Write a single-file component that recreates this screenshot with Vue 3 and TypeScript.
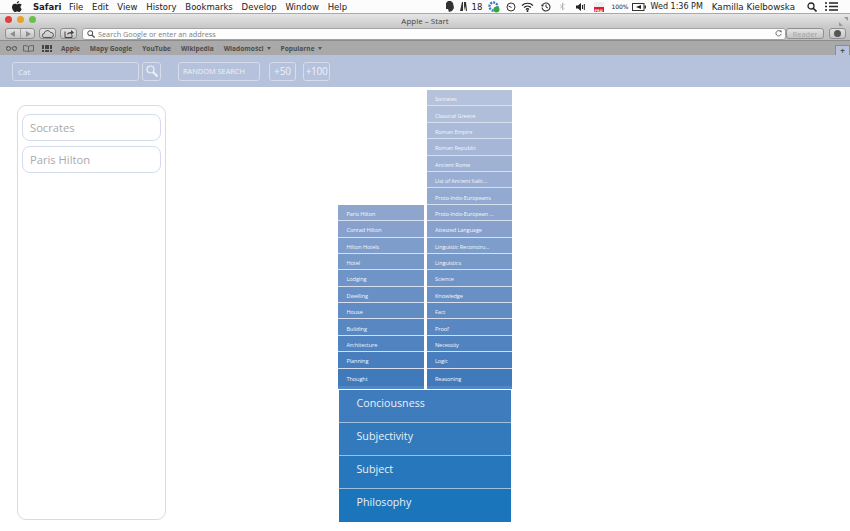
<script setup lang="ts">
const menuItems = ['File', 'Edit', 'View', 'History', 'Bookmarks', 'Develop', 'Window', 'Help']
const bookmarks = [
  { label: 'Apple', more: false },
  { label: 'Mapy Google', more: false },
  { label: 'YouTube', more: false },
  { label: 'Wikipedia', more: false },
  { label: 'Wiadomości', more: true },
  { label: 'Popularne', more: true },
]
const saved = ['Socrates', 'Paris Hilton']

const leftPath = ['Paris Hilton', 'Conrad Hilton', 'Hilton Hotels', 'Hotel', 'Lodging', 'Dwelling', 'House', 'Building', 'Architecture', 'Planning', 'Thought']
const rightPath = [
  'Socrates', 'Classical Greece', 'Roman Empire', 'Roman Republic', 'Ancient Rome', 'List of Ancient Italic...',
  'Proto-Indo-Europeans', 'Proto-Indo-European ...', 'Attested Language', 'Linguistic Reconstru...', 'Linguistics',
  'Science', 'Knowledge', 'Fact', 'Proof', 'Necessity', 'Logic', 'Reasoning',
]
const basePath = ['Conciousness', 'Subjectivity', 'Subject', 'Philosophy']

type Rgb = [number, number, number]

function mix(a: Rgb, b: Rgb, t: number) {
  const c = a.map((v, i) => Math.round(v + (b[i] - v) * t))
  return `rgb(${c[0]}, ${c[1]}, ${c[2]})`
}

// rows get darker towards the trunk, both columns share one ramp
function rowColor(fromEnd: number) {
  const t = fromEnd / 17
  if (t < 0.55) return mix([64, 122, 187], [138, 163, 205], t / 0.55)
  return mix([138, 163, 205], [182, 194, 220], (t - 0.55) / 0.45)
}

function baseColor(i: number) {
  return mix([62, 124, 189], [27, 117, 187], i / 3)
}
</script>

<template>
  <div class="page">
    <div class="menubar">
      <svg class="apple" width="10" height="11" viewBox="0 0 20 22">
        <path d="M14 0c.2 2.400-2 5-4.500 4.800C9.300 2.500 11.700.2 14 0zM19.500 16c-1 2.500-3 6-5.200 6-1.500 0-2-1-4-1s-2.500 1-4 1C3.500 22 0 16.500 0 12c0-4.500 3-6.700 5.700-6.700 1.800 0 3.200 1.200 4.300 1.200s2.800-1.400 5-1.200c1 0 3.300.4 4.600 2.400-3.700 2.400-3 7.300-.1 8.300z" fill="#222" />
      </svg>
      <span class="app-name">Safari</span>
      <span v-for="item in menuItems" :key="item" class="menu-item">{{ item }}</span>
      <div class="status">
        <svg width="9" height="11" viewBox="0 0 9 11"><path d="M1 2l2-2h3l2 2 1 5-2 3-3 1-1-3H1z" fill="#333" /></svg>
        <svg width="10" height="9" viewBox="0 0 10 9"><path d="M0 9l2-9h1v9zM4 0h2l1 9H6L5 4 4 9z" fill="#333" /></svg>
        <span class="badge-num">18</span>
        <svg class="gear" width="12" height="12" viewBox="0 0 12 12"><circle cx="5.500" cy="5.500" r="4" fill="none" stroke="#3d7fc4" stroke-width="2.400" stroke-dasharray="2 1" /><circle cx="8.500" cy="8.500" r="3" fill="#35a83c" /></svg>
        <svg class="dial" width="10" height="10" viewBox="0 0 10 10"><circle cx="5" cy="5" r="4" fill="none" stroke="#333" /><path d="M2.500 4l3 1.500" stroke="#333" /></svg>
        <svg class="wifi" width="13" height="10" viewBox="0 0 13 10"><path d="M1 3.500c3-3 8-3 11 0M3 5.500c2-2 5-2 7 0M5 7.500c1-1 2-1 3 0" fill="none" stroke="#222" stroke-width="1.200" /><circle cx="6.500" cy="9" r="1" fill="#222" /></svg>
        <svg class="clock" width="10" height="10" viewBox="0 0 10 10"><path d="M1.500 3A4 4 0 1 1 1 5.500" fill="none" stroke="#333" stroke-width="1.100" /><path d="M5 2.500V5l2 1" fill="none" stroke="#333" /><path d="M0 2.500l3 1-2 1.500z" fill="#333" /></svg>
        <svg class="bt" width="5" height="9" viewBox="0 0 5 9"><path d="M0 2.500l4 4L2.500 8V1L4 2.500l-4 4" fill="none" stroke="#aaa" stroke-width=".8" /></svg>
        <svg class="vol" width="9" height="8" viewBox="0 0 9 8"><path d="M0 2.500h2L5 0v8L2 5.500H0z" fill="#222" /><path d="M6.500 2v4M8.300 1v6" stroke="#222" /></svg>
        <div class="flag"><span class="flag-pro">PRO</span></div>
        <span class="battery-text">100%</span>
        <svg class="battery" width="14" height="8" viewBox="0 0 14 8"><rect x=".5" y=".5" width="11.500" height="7" fill="none" stroke="#333" /><path d="M9 2v4L4 4z" fill="#222" /><rect x="12.500" y="2.500" width="1.500" height="3" fill="#333" /></svg>
        <span class="clock-text">Wed 1:36 PM</span>
        <span class="user">Kamilla Kielbowska</span>
        <svg class="spot" width="10" height="10" viewBox="0 0 10 10"><circle cx="4" cy="4" r="3" fill="none" stroke="#222" stroke-width="1.300" /><path d="M6.200 6.200L9.500 9.500" stroke="#222" stroke-width="1.600" /></svg>
        <svg class="list" width="13" height="9" viewBox="0 0 13 9"><path d="M0 1h2M4 1h9M0 4.500h2M4 4.500h9M0 8h2M4 8h9" stroke="#222" stroke-width="1.500" /></svg>
      </div>
    </div>

    <div class="titlebar">
      <div class="lights">
        <i class="light red" />
        <i class="light yellow" />
        <i class="light green" />
      </div>
      <span class="title">Apple – Start</span>
      <svg class="expand" width="9" height="9" viewBox="0 0 9 9"><path d="M5 0h4v4zM0 9V5l4 4z" fill="#999" /></svg>
    </div>

    <div class="toolbar">
      <div class="tool nav">
        <svg width="6" height="6" viewBox="0 0 6 6"><path d="M5 0v6L0 3z" fill="#8c8c8c" /></svg>
        <span class="nav-line" />
        <svg width="6" height="6" viewBox="0 0 6 6"><path d="M1 0v6l5-3z" fill="#8c8c8c" /></svg>
      </div>
      <div class="tool cloud">
        <svg width="12" height="8" viewBox="0 0 12 8"><path d="M3 7.500H2.500a2 2 0 0 1-.3-4A3.300 3.300 0 0 1 8.500 2.500a2.500 2.500 0 0 1 .8 5z" fill="none" stroke="#555" /></svg>
      </div>
      <div class="tool share">
        <svg width="10" height="9" viewBox="0 0 10 9"><path d="M1 2.500v6h7V6" fill="none" stroke="#444" /><path d="M3 6c0-2 1.500-3 4-3V1l3 2.500L7 6V4.500C5 4.500 4 5 3 6z" fill="#444" /></svg>
      </div>
      <div class="address">
        <svg width="8" height="8" viewBox="0 0 10 10"><circle cx="4" cy="4" r="3" fill="none" stroke="#555" stroke-width="1.300" /><path d="M6.200 6.200L9.500 9.500" stroke="#555" stroke-width="1.600" /></svg>
        <span class="address-hint">Search Google or enter an address</span>
        <svg class="reload" width="7" height="7" viewBox="0 0 8 8"><path d="M6.500 2A3 3 0 1 0 7 4.500" fill="none" stroke="#555" /><path d="M5 .5h2.500V3z" fill="#555" /></svg>
      </div>
      <div class="tool reader">Reader</div>
      <div class="tool download"><i class="download-dot" /></div>
    </div>

    <div class="bookmarks">
      <svg class="bm-glasses" width="11" height="6" viewBox="0 0 11 6"><circle cx="2.500" cy="3.500" r="2" fill="none" stroke="#555" /><circle cx="8.500" cy="3.500" r="2" fill="none" stroke="#555" /><path d="M4.500 3h2M.5 3l1-2M10.500 3l-1-2" stroke="#555" stroke-width=".7" /></svg>
      <svg class="bm-book" width="11" height="7" viewBox="0 0 11 7"><path d="M5.500 1.500C4 .5 2 .5.500.5v5.500c2 0 3.500 0 5 .8 1.500-.8 3-.8 5-.8V.5c-1.500 0-3.500 0-5 1zM5.500 1.500v5.300" fill="none" stroke="#555" stroke-width=".8" /></svg>
      <div class="bm-grid"><i v-for="n in 12" :key="n" /></div>
      <span v-for="b in bookmarks" :key="b.label" class="bm-item">
        {{ b.label }}<i v-if="b.more" class="caret" />
      </span>
      <div class="new-tab">+</div>
    </div>

    <div class="searchbar">
      <div class="field query">Cat</div>
      <button class="field search-btn">
        <svg width="12" height="12" viewBox="0 0 12 12"><circle cx="4.500" cy="4.500" r="3.500" fill="none" stroke="#eef1f7" stroke-width="1.200" /><path d="M7.200 7.200L11.500 11.500" stroke="#eef1f7" stroke-width="2" /></svg>
      </button>
      <div class="field random">RANDOM SEARCH</div>
      <div class="field more">+50</div>
      <div class="field more hundred">+100</div>
    </div>

    <div class="main">
      <aside class="saved">
        <div v-for="s in saved" :key="s" class="saved-card">{{ s }}</div>
      </aside>

      <div class="tree">
        <div class="branches">
          <ul class="branch">
            <li v-for="(row, i) in leftPath" :key="row" class="leaf" :style="{ background: rowColor(leftPath.length - 1 - i) }">{{ row }}</li>
          </ul>
          <ul class="branch">
            <li v-for="(row, i) in rightPath" :key="row" class="leaf" :style="{ background: rowColor(rightPath.length - 1 - i) }">{{ row }}</li>
          </ul>
        </div>
        <ul class="trunk">
          <li v-for="(row, i) in basePath" :key="row" class="trunk-row" :style="{ background: baseColor(i) }">{{ row }}</li>
        </ul>
      </div>
    </div>
  </div>
</template>

<style scoped>
.page {
  width: 850px;
  height: 531px;
  overflow: hidden;
  background: #fff;
  font-family: "Open Sans", "Noto Sans", sans-serif;
}

.menubar {
  display: flex;
  align-items: center;
  height: 13px;
  background: #fcfcfc;
  font-family: "DejaVu Sans", sans-serif;
  font-size: 8.500px;
  color: #222;
}

.apple {
  margin: 0 11px 0 12px;
}

.app-name {
  margin: 0 14px 0 0;
  font-weight: 700;
  width: 22px;
}

.menu-item {
  margin-right: 8.800px;
}

.status {
  display: flex;
  align-items: center;
  margin-left: auto;
  padding-right: 12px;
}

.badge-num {
  margin: 0 6px 0 2px;
}

.status > svg:first-child {
  margin-right: 6px;
}

.dial { margin: 0 5px 0 6px; }
.wifi { margin-right: 7px; }
.clock { margin-right: 9px; }
.bt { margin-right: 11px; }
.vol { margin-right: 9px; }

.flag {
  position: relative;
  width: 10px;
  height: 10px;
  margin-right: 7px;
  background: linear-gradient(#eee 50%, #e8173a 50%);
}

.flag-pro {
  position: absolute;
  left: 0;
  bottom: -1px;
  font-size: 3.500px;
  font-weight: 700;
  color: #fff;
}

.battery-text {
  font-size: 6px;
  margin-right: 3px;
}

.battery { margin-right: 5px; }

.clock-text {
  font-size: 8px;
  margin-right: 9px;
}

.user {
  font-size: 8.700px;
  margin-right: 12px;
}

.spot { margin-right: 8px; }

.titlebar {
  position: relative;
  display: flex;
  align-items: center;
  justify-content: center;
  height: 14px;
  background: linear-gradient(#e6e6e6, #c9c9c9);
  border-top: 1px solid #a9a9a9;
  box-sizing: border-box;
  font-size: 8px;
  color: #444;
}

.lights {
  position: absolute;
  left: 5px;
  top: 2px;
  display: flex;
  gap: 5px;
}

.light {
  width: 7px;
  height: 7px;
  border-radius: 50%;
}

.red { background: #e0403c; }
.yellow { background: #e4a32d; }
.green { background: #69bf4e; }

.expand {
  position: absolute;
  right: 2px;
  top: 3px;
}

.toolbar {
  display: flex;
  align-items: center;
  height: 14px;
  padding-left: 5px;
  background: linear-gradient(#c9c9c9, #bdbdbd);
  border-bottom: 1px solid #8c8c8c;
  box-sizing: border-box;
}

.tool {
  display: flex;
  align-items: center;
  justify-content: center;
  height: 11px;
  box-sizing: border-box;
  border: 1px solid #8f8f8f;
  border-radius: 3px;
  background: linear-gradient(#e4e4e4, #c4c4c4);
}

.nav {
  width: 30px;
  gap: 4px;
}

.nav-line {
  width: 1px;
  height: 9px;
  background: #a0a0a0;
}

.cloud {
  width: 17px;
  margin-left: 4px;
}

.share {
  width: 17px;
  margin-left: 4px;
}

.address {
  display: flex;
  align-items: center;
  width: 704px;
  height: 12px;
  margin-left: 5px;
  padding: 0 3px 0 4px;
  box-sizing: border-box;
  background: #fdfdfd;
  border: 1px solid #a3a3a3;
  border-radius: 3px;
}

.address-hint {
  margin-left: 3px;
  font-size: 7.300px;
  color: #808080;
}

.reload {
  margin-left: auto;
}

.reader {
  width: 38px;
  font-size: 7.500px;
  color: #a5a5a5;
}

.download {
  width: 17px;
  margin-left: 5px;
}

.download-dot {
  width: 7px;
  height: 7px;
  border-radius: 50%;
  background: #555;
}

.bookmarks {
  display: flex;
  align-items: center;
  height: 14px;
  padding-left: 6px;
  background: #a9a9a9;
  font-size: 6.600px;
  font-weight: 700;
  color: #4d4d4d;
}

.bm-glasses { margin-right: 6px; }
.bm-book { margin-right: 8px; }

.bm-grid {
  display: grid;
  grid-template-columns: repeat(4, 2px);
  gap: 0.500px;
  width: 10px;
  margin-right: 9px;
}

.bm-grid i {
  height: 2px;
  background: #444;
}

.bm-item {
  display: flex;
  align-items: center;
  margin-right: 10px;
}

.caret {
  width: 0;
  height: 0;
  margin-left: 3px;
  border: 2px solid transparent;
  border-top: 3px solid #555;
  border-bottom: 0;
}

.new-tab {
  align-self: flex-end;
  width: 15px;
  height: 10px;
  margin-left: auto;
  box-sizing: border-box;
  border: 1px solid #8c8c8c;
  border-bottom: 0;
  background: #b6c2dc;
  font-size: 8px;
  line-height: 9px;
  text-align: center;
}

.searchbar {
  display: flex;
  align-items: center;
  height: 32px;
  padding-left: 12px;
  box-sizing: border-box;
  background: #b6c2dc;
}

.field {
  display: flex;
  align-items: center;
  justify-content: center;
  height: 19px;
  box-sizing: border-box;
  padding: 0;
  border: 1px solid #d5dcea;
  border-radius: 3px;
  background: transparent;
  color: #eef1f7;
  font-family: inherit;
  font-size: 8px;
}

.query {
  justify-content: flex-start;
  width: 127px;
  padding-left: 5px;
}

.search-btn {
  width: 19px;
  margin-left: 3px;
}

.random {
  justify-content: flex-start;
  width: 82px;
  margin-left: 17px;
  padding-left: 4px;
  font-size: 7.400px;
}

.more {
  width: 27px;
  margin-left: 9px;
  font-size: 10px;
}

.hundred {
  width: 27px;
  margin-left: 7px;
  letter-spacing: -0.300px;
}

.main {
  display: flex;
  align-items: flex-start;
}

.saved {
  display: flex;
  flex-direction: column;
  gap: 5px;
  width: 149px;
  height: 415px;
  margin: 18px 0 0 17px;
  padding: 8px 4px;
  box-sizing: border-box;
  border: 1px solid #d3dbec;
  border-radius: 9px;
}

.saved-card {
  display: flex;
  align-items: center;
  height: 27px;
  padding-left: 7px;
  box-sizing: border-box;
  border: 1px solid #d3dbec;
  border-radius: 8px;
  font-size: 11.200px;
  color: #a9a9a9;
}

.tree {
  display: flex;
  flex-direction: column;
  width: 174px;
  margin: 3px 0 0 172px;
}

.branches {
  display: flex;
  align-items: flex-end;
  gap: 3px;
}

.branch {
  width: 85.500px;
  margin: 0;
  padding: 0;
  list-style: none;
}

.leaf {
  display: flex;
  align-items: center;
  height: 16.400px;
  padding: 3px 0 0 8.500px;
  box-sizing: border-box;
  border-bottom: 1.500px solid #d5dfef;
  font-size: 5.600px;
  font-weight: 500;
  letter-spacing: -0.100px;
  color: #f3f6fb;
  white-space: nowrap;
}

/* last row runs on into the trunk, with a soft band instead of a rule */
.leaf:last-child {
  height: 20.300px;
  padding-top: 1px;
  border-bottom: 0;
  box-shadow: inset 0 -3px 0 rgba(255, 255, 255, 0.1);
}

.trunk {
  width: 172px;
  margin: 1px 0 0 1px;
  padding: 0;
  list-style: none;
}

.trunk-row {
  height: 33px;
  padding: 6px 0 0 17.500px;
  box-sizing: border-box;
  border-bottom: 1px solid #9dc0e2;
  font-size: 10.700px;
  line-height: 15px;
  color: #e8f0f8;
}

.trunk-row:last-child {
  border-bottom: 0;
}
</style>
